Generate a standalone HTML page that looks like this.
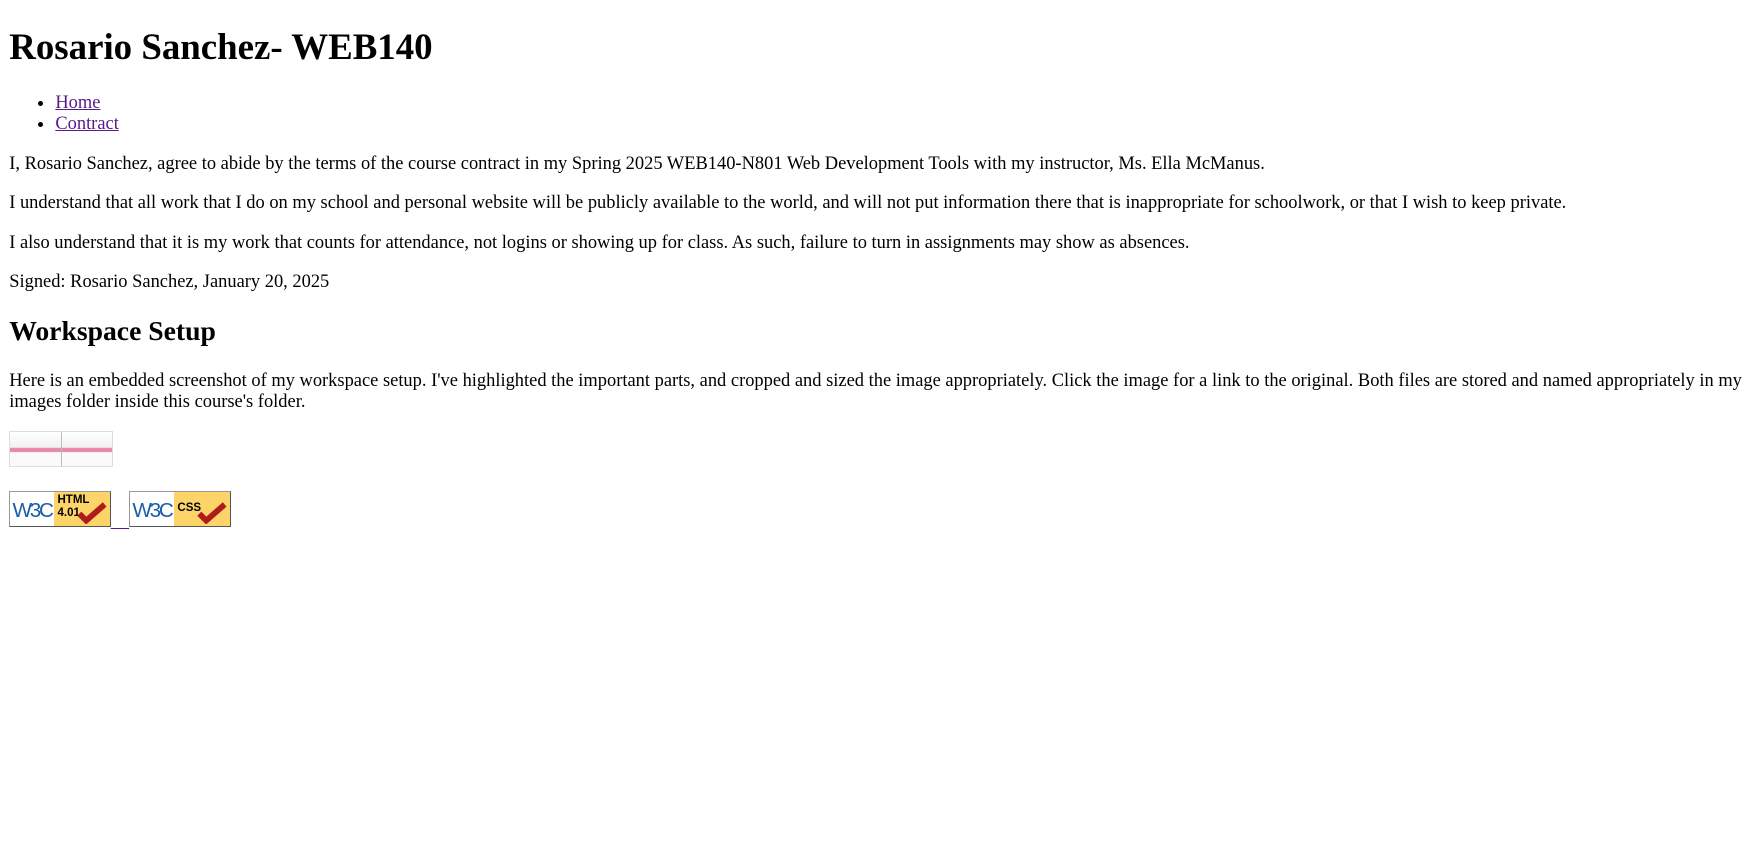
<!DOCTYPE html>
<html><head><meta charset="utf-8">
<style>
html{zoom:1.153}
body{margin:8px;font-family:"Liberation Serif",serif;font-size:16px;color:#000;background:#fff}
a{color:#551a8b}
.badge{display:inline-block;width:88px;height:31px;vertical-align:baseline;position:relative;box-sizing:border-box;border:1px solid #999;border-right-color:#555;border-bottom-color:#555;background:#fff;font-family:"Liberation Sans",sans-serif;overflow:hidden}
.badge .w{position:absolute;left:2px;top:6px;font-size:18px;color:#1b5ea5;letter-spacing:-2px;font-family:"Liberation Sans Narrow","Liberation Sans",sans-serif}
.badge .y{position:absolute;left:38px;top:0;right:0;bottom:0;background:#fcd469}
.badge .t{position:absolute;left:41px;top:2px;font-size:10px;font-weight:bold;color:#000;line-height:11px}
.thumb{display:inline-block;width:90px;height:32px;background:linear-gradient(#fff 0,#f2f2f2 45%,#e88aa8 48%,#e88aa8 58%,#fafafa 60%);border:1px solid #ddd;box-sizing:border-box;position:relative}
</style></head><body>
<h1>Rosario Sanchez- WEB140</h1>
<ul><li><a href="#">Home</a></li><li><a href="#">Contract</a></li></ul>
<p>I, Rosario Sanchez, agree to abide by the terms of the course contract in my Spring 2025 WEB140-N801 Web Development Tools with my instructor, Ms. Ella McManus.</p>
<p>I understand that all work that I do on my school and personal website will be publicly available to the world, and will not put information there that is inappropriate for schoolwork, or that I wish to keep private.</p>
<p>I also understand that it is my work that counts for attendance, not logins or showing up for class. As such, failure to turn in assignments may show as absences.</p>
<p>Signed: Rosario Sanchez, January 20, 2025</p>
<h2>Workspace Setup</h2>
<p>Here is an embedded screenshot of my workspace setup. I've highlighted the important parts, and cropped and sized the image appropriately. Click the image for a link to the original. Both files are stored and named appropriately in my images folder inside this course's folder.</p>
<p><a href="#"><span class="thumb"><span style="position:absolute;left:44px;top:0;bottom:0;width:1px;background:#bbb"></span></span></a></p>
<p><a href="#"><span class="badge"><span class="w">W3C</span><span class="y"></span><span class="t">HTML<br>4.01</span><svg style="position:absolute;right:2px;bottom:1px" width="26" height="20" viewBox="0 0 26 20"><path d="M2 11 L8 17 L24 3" stroke="#b01c1c" stroke-width="5" fill="none"/></svg></span>&nbsp;&nbsp;&nbsp;&nbsp;</a><a href="#"><span class="badge"><span class="w">W3C</span><span class="y"></span><span class="t" style="top:9px">CSS</span><svg style="position:absolute;right:2px;bottom:1px" width="26" height="20" viewBox="0 0 26 20"><path d="M2 11 L8 17 L24 3" stroke="#b01c1c" stroke-width="5" fill="none"/></svg></span></a></p>
</body></html>
